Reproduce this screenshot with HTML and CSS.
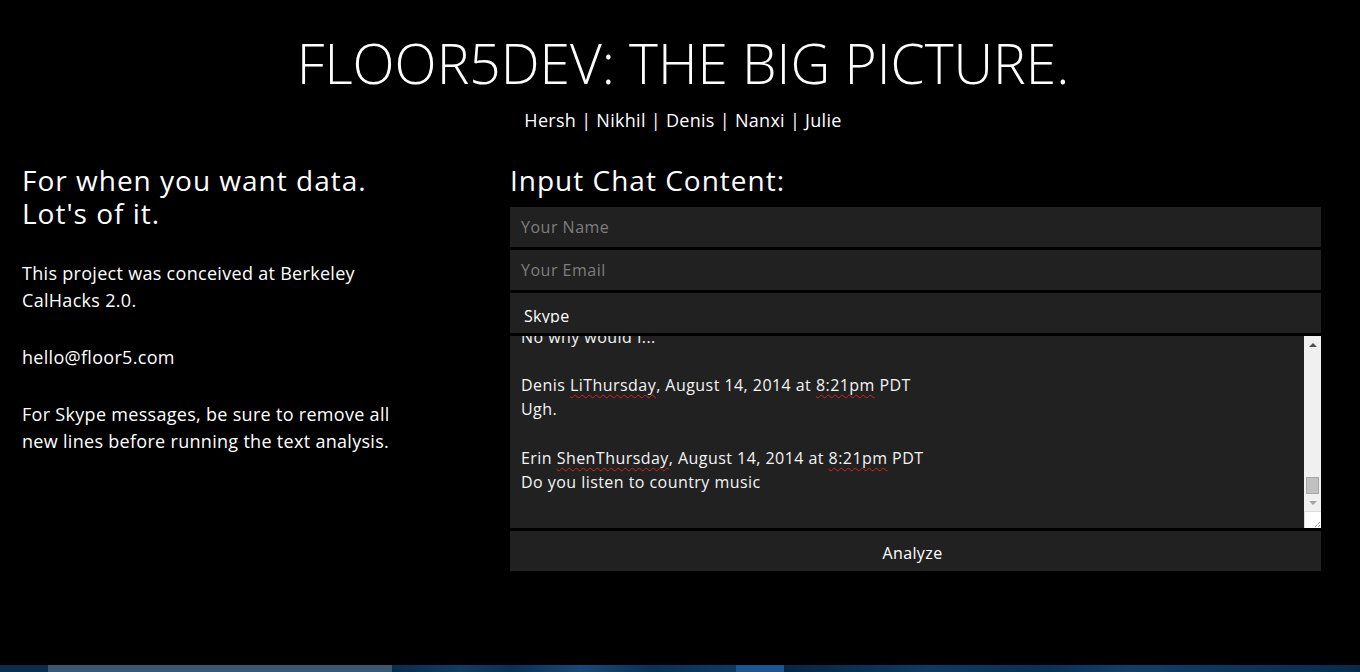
FILE: index.html
```html
<!DOCTYPE html>
<html lang="en">
<head>
<meta charset="utf-8">
<title>Floor5Dev: The Big Picture</title>
<link rel="stylesheet" href="styles.css">
</head>
<body>
<div class="page">
  <header class="top">
    <h1 class="title">FLOOR5DEV: THE BIG PICTURE.</h1>
    <nav class="team">Hersh | Nikhil | Denis | Nanxi | Julie</nav>
  </header>

  <main class="content">
    <section class="intro">
      <h2 class="heading">For when you want data.<br>Lot's of it.</h2>
      <p class="text">This project was conceived at Berkeley CalHacks 2.0.</p>
      <p class="text">hello@floor5.com</p>
      <p class="text">For Skype messages, be sure to remove all new lines before running the text analysis.</p>
    </section>

    <section class="chat">
      <h2 class="heading">Input Chat Content:</h2>
      <form class="chat-form">
        <div class="field placeholder">Your Name</div>
        <div class="field placeholder">Your Email</div>
        <div class="field select"><span class="select-value">Skype</span></div>
        <div class="chat-box">
          <div class="chat-view">
            <div class="chat-lines">
              <div class="line">No why would I...</div>
              <div class="line">&nbsp;</div>
              <div class="line">Denis <span class="typo">LiThursday</span>, August 14, 2014 at <span class="typo">8:21pm</span> PDT</div>
              <div class="line">Ugh.</div>
              <div class="line">&nbsp;</div>
              <div class="line">Erin <span class="typo">ShenThursday</span>, August 14, 2014 at <span class="typo">8:21pm</span> PDT</div>
              <div class="line">Do you listen to country music</div>
            </div>
          </div>
          <div class="scrollbar">
            <div class="sb-arrow sb-up"></div>
            <div class="sb-track"><div class="sb-thumb"></div></div>
            <div class="sb-arrow sb-down"></div>
            <div class="sb-corner">
              <svg width="17" height="17" viewBox="0 0 17 17"><path d="M15 10 L10 15 M15 13 L13 15" stroke="#555" stroke-width="1" stroke-dasharray="1 1"/></svg>
            </div>
          </div>
        </div>
        <div class="button">Analyze</div>
      </form>
    </section>
  </main>

  <footer class="taskbar">
    <span class="tb tb-start"></span>
    <span class="tb tb-app"></span>
    <span class="tb tb-wall"></span>
    <span class="tb tb-active"></span>
    <span class="tb tb-rest"></span>
  </footer>
</div>
</body>
</html>
```

FILE: styles.css
```css
html, body {
  margin: 0;
  padding: 0;
  background: #000;
}

body {
  font-family: "Open Sans", "DejaVu Sans", sans-serif;
  color: #fff;
}

.page {
  min-height: 100vh;
  display: flex;
  flex-direction: column;
}

.top {
  display: flex;
  flex-direction: column;
  align-items: center;
  padding-left: 6px;
}

.title {
  margin: 30px 0 0;
  font-size: 55px;
  font-weight: 300;
  line-height: 66px;
  letter-spacing: 0;
}

.team {
  margin-top: 12px;
  font-size: 18px;
  line-height: 24px;
  letter-spacing: 0.3px;
}

.content {
  display: flex;
  margin-top: 32px;
  padding: 0 39px 0 22px;
}

.intro {
  width: 402px;
  flex: none;
  display: flex;
  flex-direction: column;
  gap: 30px;
  margin-right: 86px;
}

.heading {
  margin: 0;
  font-size: 28px;
  font-weight: 400;
  line-height: 33px;
  letter-spacing: 1px;
}

.text {
  margin: 0;
  font-size: 18px;
  line-height: 27px;
  letter-spacing: 0.3px;
}

.chat {
  flex: 1;
  display: flex;
  flex-direction: column;
  gap: 10px;
}

.chat-form {
  display: flex;
  flex-direction: column;
  gap: 3px;
  margin: 0;
}

.field {
  height: 40px;
  background: #212121;
  box-sizing: border-box;
  padding: 0 11px;
  font-size: 16px;
  line-height: 40px;
  letter-spacing: 0.5px;
}

.placeholder {
  color: #7e7e7e;
}

.select {
  padding: 11px 14px 0;
  line-height: 24px;
  letter-spacing: 0.3px;
}

.select-value {
  display: block;
  height: 19px;
  overflow: hidden;
  color: #fff;
}

.chat-box {
  height: 192px;
  display: flex;
  background: #212121;
}

.chat-view {
  flex: 1;
  overflow: hidden;
  padding: 0 11px;
}

.chat-lines {
  margin-top: -11.5px;
  font-size: 16px;
  line-height: 24.3px;
  letter-spacing: 0.45px;
  color: #f4f4f4;
}

.typo {
  text-decoration: underline wavy #d42020;
  text-decoration-thickness: 1px;
  text-underline-offset: 3px;
  text-decoration-skip-ink: none;
}

.scrollbar {
  width: 17px;
  flex: none;
  display: flex;
  flex-direction: column;
  background: #f0f0f0;
}

.sb-arrow {
  height: 17px;
  flex: none;
  display: flex;
  align-items: center;
  justify-content: center;
}

.sb-arrow::before {
  content: "";
  width: 0;
  height: 0;
  border-left: 4px solid transparent;
  border-right: 4px solid transparent;
}

.sb-up::before {
  border-bottom: 4px solid #505050;
}

.sb-down::before {
  border-top: 4px solid #a3a3a3;
}

.sb-track {
  flex: 1;
  display: flex;
  flex-direction: column;
  justify-content: flex-end;
  align-items: center;
}

.sb-thumb {
  width: 11px;
  height: 15px;
  background: #c1c1c1;
  border: 1px solid #a8a8a8;
}

.sb-corner {
  height: 17px;
  flex: none;
  background: #fff;
  border-top: 1px solid #dcdcdc;
  border-left: 1px solid #dcdcdc;
  box-sizing: border-box;
  line-height: 0;
}

.button {
  height: 40px;
  background: #212121;
  text-align: center;
  padding-right: 6px;
  font-size: 16px;
  line-height: 44px;
  letter-spacing: 0.4px;
  color: #fff;
}

.taskbar {
  margin-top: auto;
  height: 7px;
  display: flex;
  background: #082a4a;
}

.tb {
  display: block;
  height: 100%;
}

.tb-start {
  width: 48px;
  background: #0b2d50;
}

.tb-app {
  width: 344px;
  background: #3a5772;
}

.tb-wall {
  width: 344px;
  background: linear-gradient(90deg, #0a2c4e 0%, #123c62 20%, #0c3055 35%, #164a76 55%, #0b3157 75%, #0d3a63 100%);
}

.tb-active {
  width: 48px;
  background: #1c5590;
}

.tb-rest {
  flex: 1;
  background: linear-gradient(90deg, #062645 0%, #0f3a62 25%, #0a3156 45%, #113e68 60%, #082b4d 100%);
}
```
